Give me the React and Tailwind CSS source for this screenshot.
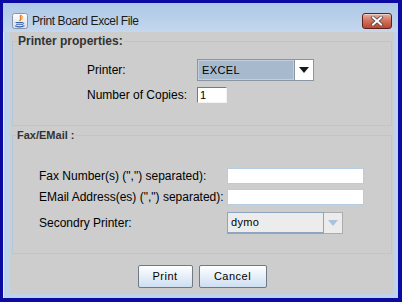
import React from "react";

function JavaIcon() {
  return (
    <svg width="16" height="16" viewBox="0 0 16 16">
      <defs>
        <linearGradient id="jbg" x1="0" y1="0" x2="0" y2="1">
          <stop offset="0" stopColor="#ffffff" />
          <stop offset="1" stopColor="#d3dce8" />
        </linearGradient>
      </defs>
      <rect x="0.5" y="0.5" width="15" height="15" rx="2" fill="url(#jbg)" stroke="#8796ab" />
      <path d="M9 2.5c-2 1.5 1.5 2.5-1 5" stroke="#e8761c" strokeWidth="1.6" fill="none" strokeLinecap="round" />
      <path d="M10.5 3.5c-1.2 1 0.8 1.6-0.6 3" stroke="#f0a040" strokeWidth="1" fill="none" strokeLinecap="round" />
      <path d="M4 9.5h6.5M4.5 11.2h6M3.5 13c2.5 1 6 1 8.5-0.3" stroke="#3b64a8" strokeWidth="1.1" fill="none" strokeLinecap="round" />
      <path d="M10.5 9.5c1.5 0 1.5 1.8 0 1.8" stroke="#3b64a8" strokeWidth="0.9" fill="none" />
    </svg>
  );
}

function CloseButton() {
  return (
    <div className="w-[30px] h-[16px] rounded-[3px] border border-[#5e2219] bg-gradient-to-b from-[#e9b0a2] via-[#d16f5c] to-[#bd4530] flex items-center justify-center shadow-[inset_0_1px_0_#f4cfc6]">
      <svg width="14" height="10" viewBox="0 0 14 10">
        <path d="M3 1.5l8 7M11 1.5l-8 7" stroke="#4a4a4a" strokeWidth="3.6" strokeLinecap="square" />
        <path d="M3 1.5l8 7M11 1.5l-8 7" stroke="#ffffff" strokeWidth="2" strokeLinecap="square" />
      </svg>
    </div>
  );
}

function Arrow({ color }) {
  return (
    <svg width="10" height="6" viewBox="0 0 10 6">
      <path d="M0 0h10L5 6z" fill={color} />
    </svg>
  );
}

function Label({ width, children }) {
  return (
    <div className={`${width} text-[12px] text-black whitespace-nowrap leading-[14px]`}>{children}</div>
  );
}

export default function App() {
  return (
    <div className="w-[402px] h-[302px] bg-[#0b0ba3] pl-[3px] pt-[3px] pr-[4px] pb-[4px] font-['Liberation_Sans',Arial,sans-serif]">
      <div className="h-full flex flex-col bg-[#bdd4ec] shadow-[inset_1px_1px_0_#e2ecf7]">
        {/* title bar */}
        <div className="h-[29px] shrink-0 flex items-center pt-[7px] pl-[9px] pr-[6px] bg-gradient-to-b from-[#adc7e5] to-[#c4d8ee]">
          <JavaIcon />
          <span className="ml-[4px] text-[12px] tracking-[-0.4px] text-[#1b1b1b] leading-[14px]">
            Print Board Excel File
          </span>
          <div className="ml-auto">
            <CloseButton />
          </div>
        </div>

        {/* content */}
        <div className="flex-1 ml-[7px] mr-[4px] mb-[4px] bg-[#cdcdcd] flex flex-col pt-[9px]">
          {/* Printer properties */}
          <div className="ml-[2px] w-[380px] h-[85px] border border-[#b1c8e2] flex flex-col">
            <span className="self-start -mt-[8px] ml-[4px] px-[1px] leading-[14px] text-[12px] font-bold text-[#333333] bg-[#cdcdcd]">
              Printer properties:
            </span>
            <div className="mt-[11px] pl-[74px] flex flex-col gap-[6px]">
              <div className="flex items-center h-[22px]">
                <Label width="w-[110px]">Printer:</Label>
                <div className="w-[117px] h-[22px] flex border border-[#8a96a3]">
                  <div className="flex-1 bg-[#a7bacd] shadow-[inset_0_0_0_1px_#c3d0dc] flex items-center pl-[4px] text-[11px] tracking-[0.4px] text-black">
                    EXCEL
                  </div>
                  <div className="w-[19px] bg-white border-l border-[#8a96a3] flex items-center justify-center">
                    <Arrow color="#1a1a1a" />
                  </div>
                </div>
              </div>
              <div className="flex items-center h-[16px]">
                <Label width="w-[110px]">Number of Copies:</Label>
                <div className="w-[30px] h-[16px] bg-white border border-t-[#7a7a7a] border-l-[#7a7a7a] border-r-[#f2f2f2] border-b-[#f2f2f2] pl-[2px] text-[11px] leading-[14px] text-black">
                  1
                </div>
              </div>
            </div>
          </div>

          {/* Fax / Email */}
          <div className="mt-[9px] ml-[2px] w-[380px] h-[119px] border border-[#b1c8e2] flex flex-col">
            <span className="self-start -mt-[8px] ml-[3px] px-[1px] leading-[14px] text-[11px] font-bold text-[#333333] bg-[#cdcdcd]">
              Fax/EMail :
            </span>
            <div className="mt-[26px] pl-[26px] flex flex-col">
              <div className="flex items-center h-[16px]">
                <Label width="w-[188px]">Fax Number(s) (",") separated):</Label>
                <div className="w-[137px] h-[16px] bg-white border border-[#b7cde4]" />
              </div>
              <div className="flex items-center h-[16px] mt-[5px]">
                <Label width="w-[188px]">EMail Address(es) (",") separated):</Label>
                <div className="w-[137px] h-[16px] bg-white border border-[#b7cde4]" />
              </div>
              <div className="flex items-center h-[22px] mt-[7px]">
                <Label width="w-[188px]">Secondry Printer:</Label>
                <div className="w-[116px] h-[22px] flex">
                  <div className="flex-1 bg-[#ececec] border border-[#8ea5bf] border-b-2 flex items-center pl-[3px] text-[11px] tracking-[0.3px] text-black">
                    dymo
                  </div>
                  <div className="w-[19px] bg-[#ececec] border border-l-0 border-[#adadad] flex items-center justify-center">
                    <Arrow color="#a9c2dd" />
                  </div>
                </div>
              </div>
            </div>
          </div>

          {/* buttons */}
          <div className="mt-[11px] flex justify-center gap-[6px]">
            <div className="w-[55px] h-[23px] border border-[#6f7a86] rounded-[2px] bg-gradient-to-b from-white to-[#cddff1] flex items-center justify-center text-[11px] tracking-[0.5px] text-black">
              Print
            </div>
            <div className="w-[68px] h-[23px] border border-[#6f7a86] rounded-[2px] bg-gradient-to-b from-white to-[#cddff1] flex items-center justify-center text-[11px] tracking-[0.5px] text-black">
              Cancel
            </div>
          </div>
        </div>
      </div>
    </div>
  );
}
